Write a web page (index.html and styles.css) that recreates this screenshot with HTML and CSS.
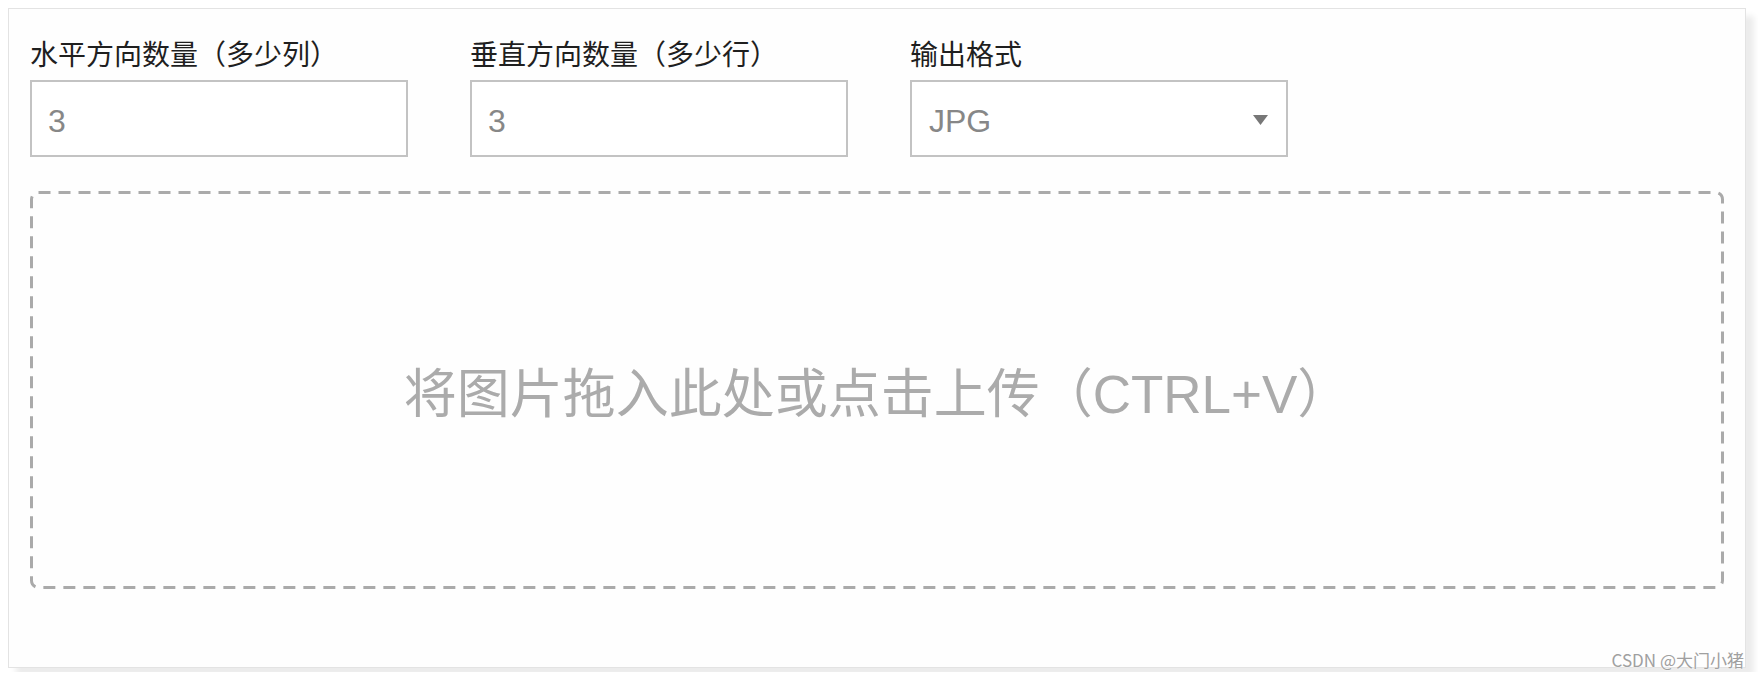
FILE: index.html
```html
<!DOCTYPE html>
<html lang="zh-CN">
<head>
<meta charset="utf-8">
<title>图片切割</title>
<link rel="stylesheet" href="styles.css">
</head>
<body>
<div class="card">
  <div class="fields">
    <div class="field">
      <label class="label">水平方向数量（多少列）</label>
      <input class="input" type="text" value="3">
    </div>
    <div class="field">
      <label class="label">垂直方向数量（多少行）</label>
      <input class="input" type="text" value="3">
    </div>
    <div class="field">
      <label class="label">输出格式</label>
      <div class="select">
        <span class="select-value">JPG</span>
        <svg class="select-arrow" width="15" height="10" viewBox="0 0 15 10"><path d="M0 0 H15 L7.5 10 Z" fill="#777"/></svg>
      </div>
    </div>
  </div>
  <div class="dropzone">
    <svg class="drop-border" width="1694" height="398" viewBox="0 0 1694 398" preserveAspectRatio="none"><rect x="1.5" y="1.5" width="1691" height="395" rx="7" ry="7" fill="none" stroke="#aaaaaa" stroke-width="3" stroke-dasharray="12 8"/></svg>
    <span class="drop-text">将图片拖入此处或点击上传（CTRL+V）</span>
  </div>
</div>
<div class="watermark">CSDN @大门小猪</div>
</body>
</html>
```

FILE: styles.css
```css
html, body {
  margin: 0;
  padding: 0;
}
body {
  background: #ffffff;
  padding: 8px 0 0 8px;
  font-family: "Liberation Sans", "Noto Sans CJK SC", sans-serif;
  position: relative;
  height: 672px;
  box-sizing: border-box;
}
.card {
  width: 1738px;
  box-sizing: border-box;
  background: #fefefe;
  border: 1px solid #e3e3e3;
  box-shadow: 8px 8px 6px #ececec;
  padding: 24px 21px 78px 21px;
}
.fields {
  display: flex;
  gap: 62px;
}
.field {
  width: 378px;
  display: flex;
  flex-direction: column;
}
.label {
  display: block;
  font-family: "Noto Sans CJK SC", sans-serif;
  font-size: 28px;
  line-height: 40px;
  color: #1f1f1f;
  margin-bottom: 7px;
  white-space: nowrap;
}
.input {
  box-sizing: border-box;
  width: 378px;
  height: 77px;
  border: 2px solid #c3c3c3;
  background: #fff;
  padding: 5px 0 0 16px;
  margin: 0;
  font-family: "Liberation Sans", sans-serif;
  font-size: 32px;
  color: #878787;
  outline: none;
}
.select {
  box-sizing: border-box;
  width: 378px;
  height: 77px;
  border: 2px solid #c3c3c3;
  background: #fff;
  padding: 0 18px 0 17px;
  display: flex;
  align-items: center;
  justify-content: space-between;
}
.select-value {
  font-family: "Liberation Sans", sans-serif;
  font-size: 32px;
  color: #878787;
  margin-top: 5px;
}
.select-arrow {
  display: block;
  margin-top: 3px;
}
.dropzone {
  position: relative;
  margin-top: 34px;
  height: 398px;
  box-sizing: border-box;
  display: flex;
  align-items: center;
  justify-content: center;
}
.drop-border {
  position: absolute;
  left: 0;
  top: 0;
}
.drop-text {
  font-family: "Liberation Sans", "Noto Sans CJK SC", sans-serif;
  font-size: 53px;
  color: #ababab;
  white-space: nowrap;
}
.watermark {
  position: absolute;
  right: 14px;
  top: 648px;
  font-family: "Noto Sans CJK SC", sans-serif;
  font-size: 17px;
  line-height: 24px;
  color: #a0a0a0;
  text-shadow: 0 0 2px #fff, 0 0 1px #fff;
}
```
